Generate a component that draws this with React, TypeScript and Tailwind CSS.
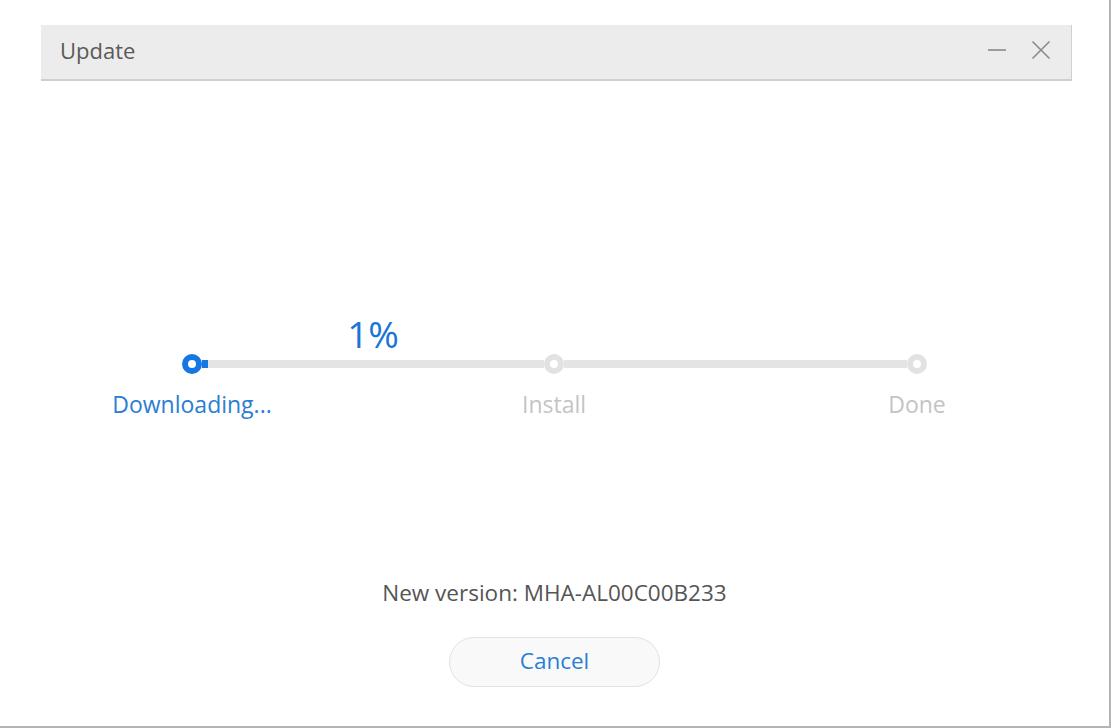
export default function App() {
  return (
    <div
      className="w-[1111px] h-[728px] bg-white border-r-2 border-b-2 border-[#b4b4b4] pt-[25px] pl-[41px] overflow-hidden"
      style={{ fontFamily: '"Open Sans", "Noto Sans", sans-serif' }}
    >
      <div className="w-[1031px] flex flex-col">
        {/* title bar */}
        <div className="h-[56px] bg-[#ececec] border-b-2 border-r border-[#d0d0d0] flex items-center pl-[19px] pr-[20px] pb-[5px]">
          <span className="text-[22px] text-[#5a5a5a] leading-none">Update</span>
          <div className="ml-auto flex items-center gap-[24px]">
            <svg width="20" height="20" viewBox="0 0 20 20">
              <line x1="1" y1="10" x2="19" y2="10" stroke="#8a8a8a" strokeWidth="1.6" />
            </svg>
            <svg width="20" height="20" viewBox="0 0 20 20">
              <path d="M1.5 1.5 L18.5 18.5 M18.5 1.5 L1.5 18.5" stroke="#8a8a8a" strokeWidth="1.6" fill="none" />
            </svg>
          </div>
        </div>

        {/* stepper */}
        <div className="pt-[234px] pl-[141px]">
          <div className="grid grid-cols-[20px_342px_20px_343px_20px] items-center">
            <div />
            <div className="justify-self-center text-[37px] leading-none text-[#1a74d6] pb-[2px]">1%</div>
            <div />
            <div />
            <div />

            <div className="w-[20px] h-[20px] rounded-full border-[6px] border-[#1677e2] bg-white" />
            <div className="h-[8px] bg-[#e4e4e4] flex">
              <div className="w-[6px] h-full bg-[#1677e2]" />
            </div>
            <div className="w-[20px] h-[20px] rounded-full border-[6px] border-[#e2e2e2] bg-white" />
            <div className="h-[8px] bg-[#e4e4e4]" />
            <div className="w-[20px] h-[20px] rounded-full border-[6px] border-[#e2e2e2] bg-white" />

            <div className="justify-self-center whitespace-nowrap text-[23px] leading-none text-[#2a7ed2] mt-[19px]">Downloading...</div>
            <div />
            <div className="justify-self-center whitespace-nowrap text-[23px] leading-none text-[#c4c4c4] mt-[19px]">Install</div>
            <div />
            <div className="justify-self-center whitespace-nowrap text-[23px] leading-none text-[#c4c4c4] mt-[19px]">Done</div>
          </div>
        </div>

        {/* version + cancel */}
        <div className="flex flex-col items-center mt-[166px] pr-[4px]">
          <div className="text-[22.5px] leading-none text-[#555555]">New version: MHA-AL00C00B233</div>
          <button className="mt-[32px] w-[211px] h-[50px] rounded-full border border-[#e2e2e2] bg-[#f9f9f9] text-[22.5px] text-[#2a7ed2] leading-none">
            Cancel
          </button>
        </div>
      </div>
    </div>
  );
}
